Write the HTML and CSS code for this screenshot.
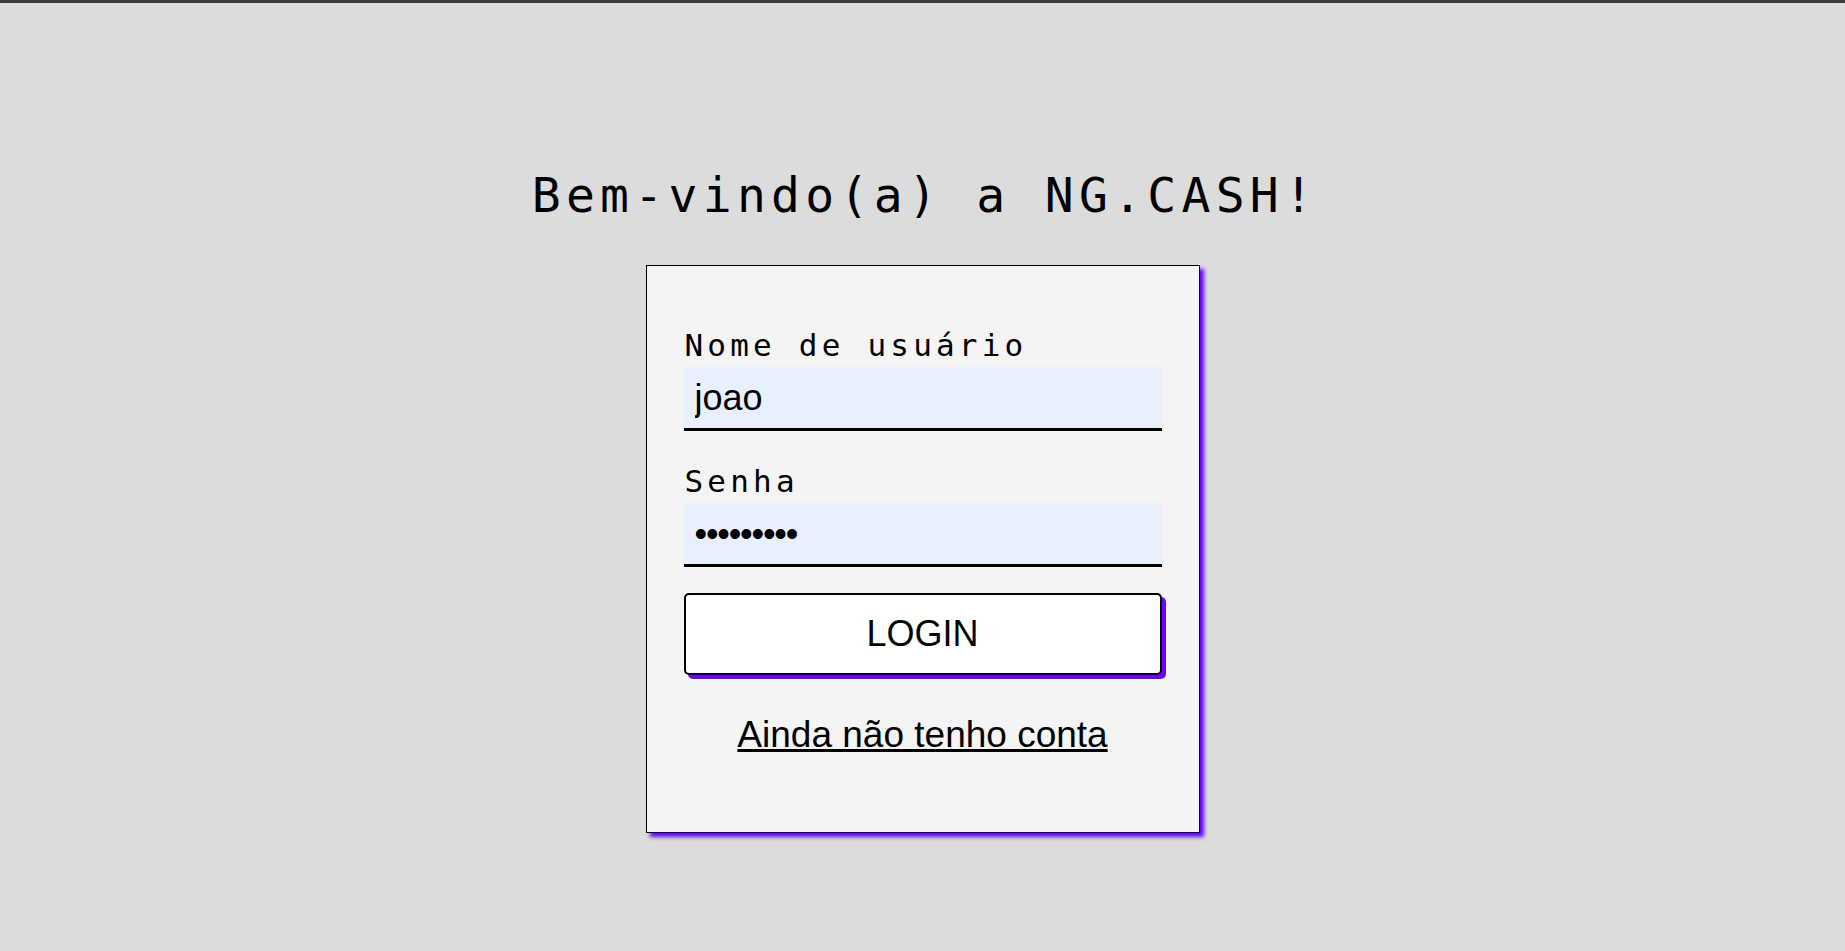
FILE: index.html
```html
<!DOCTYPE html>
<html lang="pt-BR">
<head>
<meta charset="utf-8">
<title>NG.CASH - Login</title>
<link rel="stylesheet" href="styles.css">
</head>
<body>
<div class="topbar"></div>
<main class="page">
  <h1 class="title">Bem-vindo(a) a NG.CASH!</h1>
  <div class="card">
    <form class="form">
      <label class="field">
        <span class="label">Nome de usuário</span>
        <input class="input" type="text" value="joao">
      </label>
      <label class="field field-second">
        <span class="label">Senha</span>
        <input class="input input-password" type="password" value="123456789">
      </label>
      <button class="btn" type="button">LOGIN</button>
      <a class="link" href="#">Ainda não tenho conta</a>
    </form>
  </div>
</main>
</body>
</html>
```

FILE: styles.css
```css
html, body {
  margin: 0;
  padding: 0;
}

body {
  background: #dcdcdc;
  min-height: 951px;
  font-family: "Liberation Sans", Arial, sans-serif;
  color: #000;
}

.topbar {
  height: 3px;
  background: #3b3b3b;
}

.page {
  display: flex;
  flex-direction: column;
  align-items: center;
  padding-top: 165px;
}

.title {
  margin: 0 0 43px 0;
  padding-left: 5px;
  font-family: "DejaVu Sans Mono", monospace;
  font-weight: normal;
  font-size: 48px;
  line-height: 54px;
  letter-spacing: 5.3px;
  white-space: nowrap;
}

.card {
  box-sizing: border-box;
  width: 554px;
  background: #f4f4f4;
  border: 1px solid #000;
  box-shadow: 4px 4px 4px #6200ff;
  padding: 61px 37px 77px 37px;
}

.form {
  display: flex;
  flex-direction: column;
}

.field {
  display: flex;
  flex-direction: column;
}

.field-second {
  margin-top: 32px;
}

.label {
  font-family: "DejaVu Sans Mono", monospace;
  font-size: 31px;
  line-height: 36px;
  letter-spacing: 4.2px;
  margin-bottom: 4px;
  padding-left: 1px;
}

.input {
  box-sizing: border-box;
  height: 64px;
  width: 100%;
  margin: 0;
  border: none;
  border-bottom: 3px solid #000;
  border-radius: 0;
  background: #e8f0fe;
  padding: 0 10px 0 11px;
  font-family: "Liberation Sans", Arial, sans-serif;
  font-size: 36px;
  color: #000;
  outline: none;
}

.input-password {
  letter-spacing: -1.2px;
}

.btn {
  box-sizing: border-box;
  margin-top: 26px;
  height: 82px;
  width: 100%;
  background: #fff;
  border: 2px solid #000;
  border-radius: 5px;
  box-shadow: 4px 4px 0 #7000ff;
  font-family: "Liberation Sans", Arial, sans-serif;
  font-size: 36px;
  color: #000;
  cursor: pointer;
  padding: 0;
}

.link {
  align-self: center;
  margin-top: 39px;
  font-size: 37px;
  line-height: 41px;
  color: #000;
  text-decoration: underline;
}
```
